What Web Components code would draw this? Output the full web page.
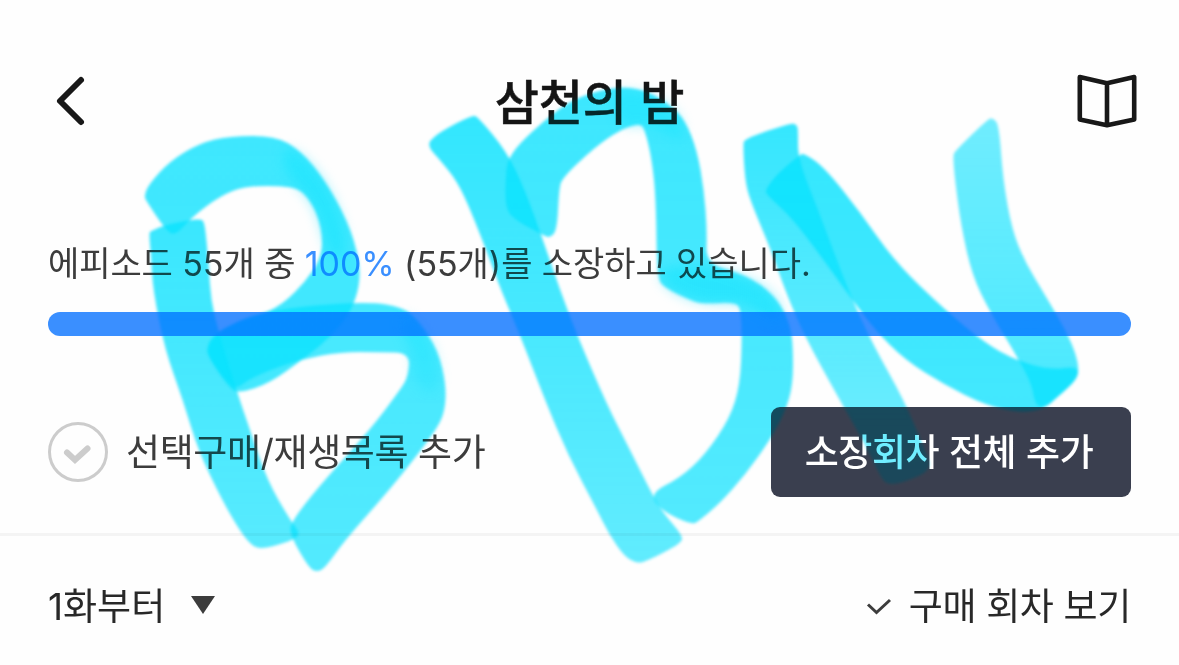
<!DOCTYPE html>
<html lang="ko">
<head>
<meta charset="utf-8">
<title>삼천의 밤</title>
<style>
  html, body { margin: 0; background: #fefefe; }
  body {
    width: 1179px;
    height: 665px;
    overflow: hidden;
    position: relative;
    font-family: Inter, "Noto Sans CJK KR", sans-serif;
    color: #3c3c3c;
  }
</style>
</head>
<body>
<episode-page></episode-page>
<marker-ink mode="multiply"></marker-ink>
<marker-ink mode="screen"></marker-ink>

<script>
/** Attach an open shadow root and fill it. */
function shadow(el, html) {
  el.attachShadow({ mode: 'open' }).innerHTML = html;
}

/** TopBar - back arrow, centred title, viewer icon. */
class TopBar extends HTMLElement {
  constructor() {
    super();
    shadow(this, `
      <style>
        :host {
          display: grid;
          grid-template-columns: 1fr auto 1fr;
          align-items: center;
          height: 80px;
          padding: 0 42px;
        }
        h1 {
          margin: 0;
          padding-bottom: 4px;
          font: 500 48px/72px "Noto Sans CJK KR", sans-serif;
          -webkit-text-stroke: 0.5px #141414;
          letter-spacing: -0.1px;
          color: #141414;
        }
        svg { display: block; fill: none; stroke: #181818; }
        .book { justify-self: end; }
      </style>
      <svg width="60" height="60" viewBox="42 71 60 60" stroke-width="6" stroke-linecap="round" stroke-linejoin="round">
        <path d="M81 80 60 101 81 122"/>
      </svg>
      <h1><slot></slot></h1>
      <svg class="book" width="60" height="60" viewBox="1077 71 60 60" stroke-width="4.6" stroke-linejoin="round">
        <path d="M1079.8 77 1107 83.2 1134.2 77V119.6L1107 125.2 1079.8 119.6ZM1107 83.2V125.2"/>
      </svg>
    `);
  }
}

/** OwnedProgress - caption with a bar below it. */
class OwnedProgress extends HTMLElement {
  constructor() {
    super();
    shadow(this, `
      <style>
        :host { display: flex; flex-direction: column; gap: 24px; }
        p { margin: 0; font-size: 34px; line-height: 48px; white-space: nowrap; font-weight: 400; letter-spacing: -0.08px; }
        ::slotted(b) { font-weight: 400; color: #3a8fff; }
        .track { height: 24px; border-radius: 12px; background: #eee; overflow: hidden; }
        .fill { height: 100%; width: ${this.getAttribute('value')}%; background: #3a8fff; }
      </style>
      <p><slot></slot></p>
      <div class="track"><div class="fill"></div></div>
    `);
  }
}

/** RoundCheck - unchecked round selector with its label. */
class RoundCheck extends HTMLElement {
  constructor() {
    super();
    shadow(this, `
      <style>
        :host { display: flex; align-items: center; gap: 18px; font-size: 37px; line-height: 54px; white-space: nowrap; font-weight: 400; letter-spacing: -0.4px; }
        svg { display: block; fill: none; stroke: #ccc; }
        span { padding-top: 2px; }
      </style>
      <svg width="60" height="60" viewBox="0 0 60 60">
        <circle cx="30" cy="30" r="28.5" stroke-width="3"/>
        <path d="M19 30.5 27 38 39.5 26.5" stroke-width="6" stroke-linecap="round"/>
      </svg>
      <span><slot></slot></span>
    `);
  }
}

/** SolidButton - dark filled action. */
class SolidButton extends HTMLElement {
  constructor() {
    super();
    shadow(this, `
      <style>
        :host { display: block; }
        button {
          display: block;
          width: 360px;
          height: 90px;
          padding: 0 4px 4px 0;
          border: 0;
          border-radius: 9px;
          background: #3a3f4f;
          color: #fff;
          font: 500 37px/54px "Noto Sans CJK KR", sans-serif;
          letter-spacing: -0.45px;
          white-space: nowrap;
        }
      </style>
      <button><slot></slot></button>
    `);
  }
}

/** ListFilter - sort order on the left, purchased toggle on the right. */
class ListFilter extends HTMLElement {
  constructor() {
    super();
    shadow(this, `
      <style>
        :host {
          display: flex;
          justify-content: space-between;
          align-items: center;
          height: 91px;
          padding: 25px 48px 0;
          font-size: 37px;
          line-height: 54px;
          color: #282828;
          white-space: nowrap;
          letter-spacing: -0.35px;
        }
        div { display: flex; align-items: center; }
        .sort { gap: 26px; letter-spacing: 0; }
        .owned { gap: 17px; }
        svg { display: block; }
        .sort svg { margin-top: -3px; }
      </style>
      <div class="sort">
        <slot name="sort"></slot>
        <svg width="24" height="18" viewBox="0 0 24 18"><path d="M0 0H24L12 18Z" fill="#3c3c3c"/></svg>
      </div>
      <div class="owned">
        <svg width="26" height="18" viewBox="0 0 26 18"><path d="M2 6.5 10.5 14.5 24 2" fill="none" stroke="#3c3c3c" stroke-width="3"/></svg>
        <slot name="owned"></slot>
      </div>
    `);
  }
}

/** EpisodePage - the whole screen. */
class EpisodePage extends HTMLElement {
  constructor() {
    super();
    shadow(this, `
      <style>
        :host { display: block; padding-top: 61px; }
        owned-progress { margin: 99px 48px 0; }
        .actions { display: flex; justify-content: space-between; align-items: center; padding: 71px 48px 36px; }
        hr { margin: 0; border: 0; height: 3px; background: #f4f4f4; }
      </style>
      <top-bar>삼천의 밤</top-bar>
      <owned-progress value="100">에피소드 55개 중 <b>100%</b> (55개)를 소장하고 있습니다.</owned-progress>
      <div class="actions">
        <round-check>선택구매/재생목록 추가</round-check>
        <solid-button>소장회차 전체 추가</solid-button>
      </div>
      <hr>
      <list-filter>
        <span slot="sort">1화부터</span>
        <span slot="owned">구매 회차 보기</span>
      </list-filter>
    `);
  }
}

// Each pen stroke: strength at its top, strength at its bottom, outline points.
// A point given twice keeps its corner sharp.
const STROKES = [
  // first B
  [.8, .68, '149,233 151,231 165,225 190,220 201,219 204,222 206,235 209,270 211,300 218,330 238,395 250,430 267,480 290,520 301,534 291,541 263,549 252,546 240,531 222,500 198,450 183,400 165,350 153,290 151,255'],
  [.78, .76, '144,196 149,184 170,161 200,143 230,136 275,136 300,150 325,180 348,222 359,258 360,285 350,314 325,342 303,359 270,383 240,393 230,389 208,357 207,344 218,331 240,321 266,313 285,302 305,282 320,260 323,240 318,215 305,193 290,186 245,186 220,196 192,217 175,236 165,229 147,202'],
  [.75, .7, '207,348 218,332 250,315 300,306 370,302 402,307 418,320 438,350 446,385 445,410 438,427 415,458 385,495 345,540 325,568 317,572 309,568 290,535 291,522 320,485 370,430 400,390 408,377 410,353 380,352 340,352 303,359 270,370 248,380 238,388 230,386 208,357'],
  // second B
  [.83, .64, '429,143 431,140 440,132 472,115 478,117 507,152 525,190 543,240 560,290 577,335 607,405 630,450 655,500 665,515 682,535 682,543 645,562 636,563 624,556 609,534 597,510 568,455 545,400 520,335 501,290 490,260 471,211 457,181 440,160 430,149'],
  [.79, .7, '509,158 520,143 545,120 570,101 600,90 625,87 647,91 670,105 685,120 697,150 704,190 707,230 706,264 740,273 765,287 781,305 790,325 793,345 793,385 785,412 770,440 745,475 720,503 700,520 692,525 660,510 650,493 680,478 705,455 730,418 740,385 742,340 741,312 737,302 702,304 690,300 665,288 657,278 656,200 652,160 645,130 640,123 620,130 595,147 562,178 559,190 557,230 550,238 543,235 515,220 505,208 506,170'],
  // N
  [.82, .56, '743,143 745,140 755,135 792,123 797,125 798,130 798,160 820,215 848,290 872,343 904,400 925,450 932,470 905,482 888,485 881,478 866,446 838,397 804,335 785,290 771,250 750,200 745,180'],
  [.82, .76, '765,190 778,173 800,155 804,153 825,168 860,212 895,262 945,310 985,343 1015,360 1050,370 1079,366 1077,380 1058,396 1045,409 1020,413 985,405 945,385 905,360 875,330 848,294 820,255 792,218 767,195'],
  [.58, .74, '953,156 955,151 988,119 993,118 999,125 1003,180 1012,230 1025,262 1045,295 1070,338 1079,365 1077,380 1045,408 1035,405 1032,385 1018,358 990,312 972,275 961,225 955,180']
];

// Places where the pen turned and the ink pooled.
const POOLS = [
  [.4, .4, '280,148 300,152 325,180 344,222 347,252 338,265 325,245 318,215 305,193 288,178'],
  [.4, .2, '404,312 420,325 436,350 441,385 434,395 420,390 412,375 412,350 400,330'],
  [.35, .35, '610,90 645,92 670,105 682,120 684,143 670,135 645,124 620,128'],
  [.45, .45, '657,267 706,265 740,275 765,287 781,305 783,325 760,315 740,302 702,304 665,288']
];

/** Smooth closed path through the midpoints of a point list. */
function smooth(list) {
  const p = list.split(' ').map(s => s.split(',').map(Number));
  const mid = (a, b) => `${(a[0] + b[0]) / 2} ${(a[1] + b[1]) / 2}`;
  let d = 'M' + mid(p[p.length - 1], p[0]);
  p.forEach((pt, i) => {
    d += `Q${pt[0]} ${pt[1]} ${mid(pt, p[(i + 1) % p.length])}`;
  });
  return d + 'Z';
}

/** MarkerInk - translucent highlighter scribble over the page. */
class MarkerInk extends HTMLElement {
  constructor() {
    super();
    const mode = this.getAttribute('mode');
    const color = mode === 'screen' ? '#001e1e' : '#08dfff';
    const draw = name => ([top, bottom, pts], i) => `
      <linearGradient id="${name}${i}" x1="0" y1="0" x2="0" y2="1">
        <stop offset="0" stop-color="${color}" stop-opacity="${top}"/>
        <stop offset="1" stop-color="${color}" stop-opacity="${bottom}"/>
      </linearGradient>
      <path d="${smooth(pts)}" fill="url(#${name}${i})"/>`;
    shadow(this, `
      <style>
        :host { position: absolute; inset: 0; pointer-events: none; mix-blend-mode: ${mode}; }
        svg { display: block; }
      </style>
      <svg width="1179" height="665" viewBox="0 0 1179 665">
        <defs>
          <filter id="edge" color-interpolation-filters="sRGB"><feGaussianBlur stdDeviation="1.6"/></filter>
          <filter id="soft" color-interpolation-filters="sRGB" x="-30%" y="-30%" width="160%" height="160%"><feGaussianBlur stdDeviation="6"/></filter>
        </defs>
        <g filter="url(#edge)">${STROKES.map(draw('stroke')).join('')}</g>
        <g filter="url(#soft)">${POOLS.map(draw('pool')).join('')}</g>
      </svg>
    `);
  }
}

customElements.define('top-bar', TopBar);
customElements.define('owned-progress', OwnedProgress);
customElements.define('round-check', RoundCheck);
customElements.define('solid-button', SolidButton);
customElements.define('list-filter', ListFilter);
customElements.define('episode-page', EpisodePage);
customElements.define('marker-ink', MarkerInk);
</script>
</body>
</html>
